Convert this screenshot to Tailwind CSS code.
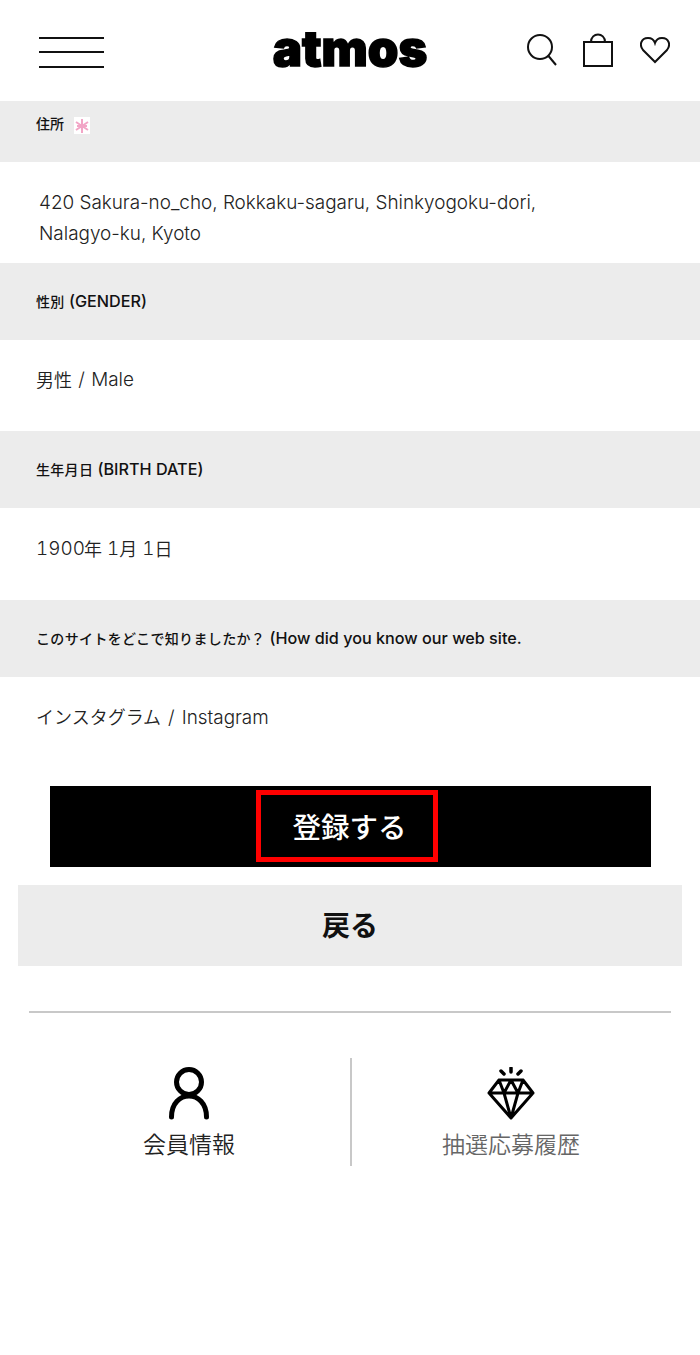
<!DOCTYPE html>
<html lang="ja">
<head>
<meta charset="utf-8">
<script src="https://cdn.jsdelivr.net/npm/@tailwindcss/browser@4"></script>
</head>
<body class="bg-white text-[#111] font-['Inter','Noto_Sans_CJK_JP',sans-serif]">
<div class="w-[700px] h-[1355px] overflow-hidden bg-white">
  <header class="h-[101px] flex items-center justify-between pl-[39px] pr-[30px] relative">
    <div class="w-[65px] h-[31px] flex flex-col justify-between mt-[3px]">
      <div class="h-[2px] bg-[#111]"></div><div class="h-[2px] bg-[#111]"></div><div class="h-[2px] bg-[#111]"></div>
    </div>
    <div class="absolute left-[250px] top-[19px] w-[200px] text-center text-[49px] leading-[60px] font-black tracking-[0px] text-black [-webkit-text-stroke:1.5px_black]">atmos</div>
    <div class="flex items-center mt-[-1px]">
      <svg width="32" height="34" viewBox="0 0 32 34" fill="none" stroke="#111" stroke-width="2"><circle cx="14" cy="14" r="12"/><path d="M22.5 23 L30 32"/></svg>
      <svg class="ml-[25px]" width="30" height="34" viewBox="0 0 30 34" fill="none" stroke="#111" stroke-width="2"><rect x="1" y="9" width="28" height="24"/><path d="M8 9 C8 -1 22 -1 22 9"/></svg>
      <svg class="ml-[27px]" width="30" height="28" viewBox="0 0 30 28" fill="none" stroke="#111" stroke-width="2"><path d="M15 26 L3 14 C-1 9 1 2 8 2 C11 2 14 4 15 7 C16 4 19 2 22 2 C29 2 31 9 27 14 Z"/></svg>
    </div>
  </header>

  <div class="h-[61px] bg-[#ececec] pl-[36px] pt-[14px] flex items-start gap-[10px]">
    <span class="text-[14px] leading-[17px] font-medium">住所</span>
    <span class="w-[16px] h-[17px] mt-[2px] bg-white flex items-center justify-center">
      <svg width="14" height="14" viewBox="0 0 14 14" fill="none" stroke="#f2a5c6" stroke-width="2"><path d="M7 0 V14 M1 3 L13 11 M13 3 L1 11 M2 7 H12"/></svg>
    </span>
  </div>
  <div class="h-[101px] pl-[39px] pt-[25px] text-[18.9px] leading-[31px] font-[350] text-[#222]">420 Sakura-no_cho, Rokkaku-sagaru, Shinkyogoku-dori,<br>Nalagyo-ku, Kyoto</div>

  <div class="h-[77px] bg-[#ececec] pl-[36px] flex items-center text-[16.2px] font-medium"><span class="text-[14px] tracking-[0.3px]">性別</span>&nbsp;(GENDER)</div>
  <div class="h-[91px] pl-[36px] pb-[10px] flex items-center text-[18.9px] font-[350] text-[#222]"><span class="text-[18px]">男性</span>&nbsp;<span class="mx-[1px]">/</span>&nbsp;Male</div>

  <div class="h-[77px] bg-[#ececec] pl-[36px] flex items-center text-[16.2px] font-medium"><span class="text-[14px] tracking-[0.3px]">生年月日</span>&nbsp;(BIRTH DATE)</div>
  <div class="h-[92px] pl-[36px] pb-[10px] flex items-center text-[18.9px] font-[350] text-[#222] tabular-nums">1900<span class="text-[18px] -ml-[1px]">年</span>&nbsp;1<span class="text-[18px]">月</span>&nbsp;1<span class="text-[18px]">日</span></div>

  <div class="h-[77px] bg-[#ececec] pl-[36px] flex items-center text-[16.2px] font-medium"><span class="text-[14px] tracking-[0.35px]">このサイトをどこで知りましたか？</span>&nbsp;(How did you know our web site.</div>
  <div class="h-[109px] pl-[36px] pt-[28px] text-[18.9px] leading-[26px] font-[350] text-[#222]"><span class="text-[18px]">インスタグラム</span><span class="ml-[7px] mr-[7px]">/</span>Instagram</div>

  <div class="ml-[50px] w-[601px] h-[81px] bg-black flex items-center justify-center">
    <div class="w-[182px] h-[72px] mr-[8px] mb-[2px] border-[5px] border-[#ff0000] flex items-center justify-center text-white text-[28.5px] font-medium pt-[5px] pl-[6px]">登録する</div>
  </div>
  <div class="mt-[18px] ml-[18px] w-[664px] h-[81px] pt-[1px] bg-[#ececec] flex items-center justify-center text-[28px] font-semibold text-[#111]">戻る</div>

  <div class="mt-[45px] mx-[29px] h-[2px] bg-[#c8c8c8]"></div>

  <div class="mt-[45px] flex">
    <div class="w-[350px] h-[108px] pl-[28px] flex flex-col items-center pt-[9px]">
      <svg width="42" height="54" viewBox="0 0 42 54" fill="none" stroke="#000" stroke-width="5" stroke-linecap="round"><circle cx="21" cy="15" r="12.5"/><path d="M3.5 50 C3.5 22 38.5 22 38.5 50"/></svg>
      <span class="mt-[9px] text-[23px] leading-[30px] font-[350] text-[#222]">会員情報</span>
    </div>
    <div class="w-[2px] h-[108px] bg-[#c8c8c8]"></div>
    <div class="flex-1 h-[108px] pr-[30px] flex flex-col items-center pt-[9px]">
      <svg width="48" height="54" viewBox="0 0 48 54" fill="none" stroke="#000" stroke-width="3.5" stroke-linejoin="round" stroke-linecap="round"><path d="M24 1 V5 M14 4 L17 7 M34 4 L31 7"/><path d="M12 13 H36 L46 26 L24 51 L2 26 Z M2 26 H46 M12 13 L17 26 L24 51 L31 26 L36 13 M17 26 L24 13 L31 26" stroke-width="3"/></svg>
      <span class="mt-[9px] text-[23px] leading-[30px] font-[350] text-[#666]">抽選応募履歴</span>
    </div>
  </div>
</div>
</body>
</html>
